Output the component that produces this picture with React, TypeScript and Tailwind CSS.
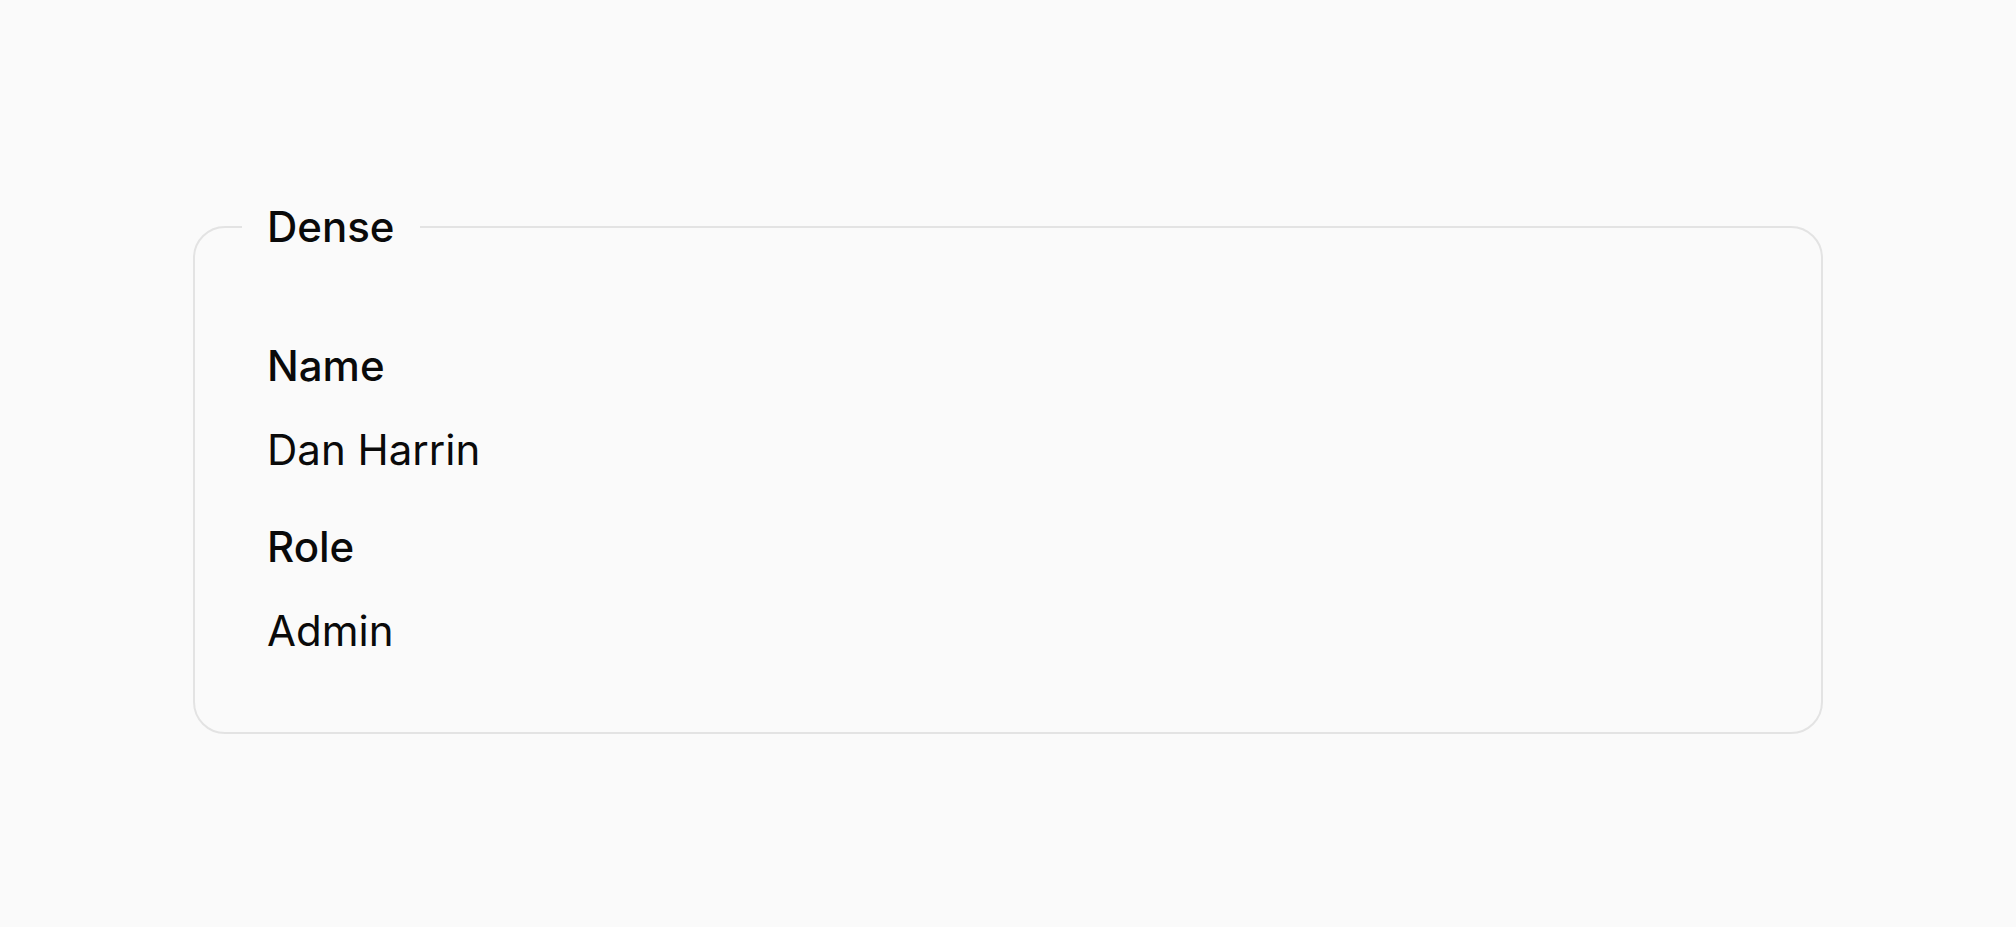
export default function App() {
  const items = [
    { label: "Name", value: "Dan Harrin" },
    { label: "Role", value: "Admin" },
  ];

  return (
    <div
      className="min-h-screen flex items-start justify-center bg-[#fafafa] px-[193px] pt-[197px] text-[#0a0a0a]"
      style={{ fontFamily: "Inter, 'Noto Sans', sans-serif" }}
    >
      <fieldset className="w-full rounded-[32px] border-2 border-[#e3e3e3] pl-[72px] pr-[72px] pt-[79px] pb-[71px]">
        <legend className="-ml-[25px] px-[25px] text-[42px] leading-[60px] font-medium">
          Dense
        </legend>
        <dl className="flex flex-col gap-[37px]">
          {items.map((item) => (
            <div key={item.label} className="flex flex-col gap-[24px]">
              <dt className="text-[42px] leading-[60px] font-medium">{item.label}</dt>
              <dd className="text-[42px] leading-[60px]">{item.value}</dd>
            </div>
          ))}
        </dl>
      </fieldset>
    </div>
  );
}
